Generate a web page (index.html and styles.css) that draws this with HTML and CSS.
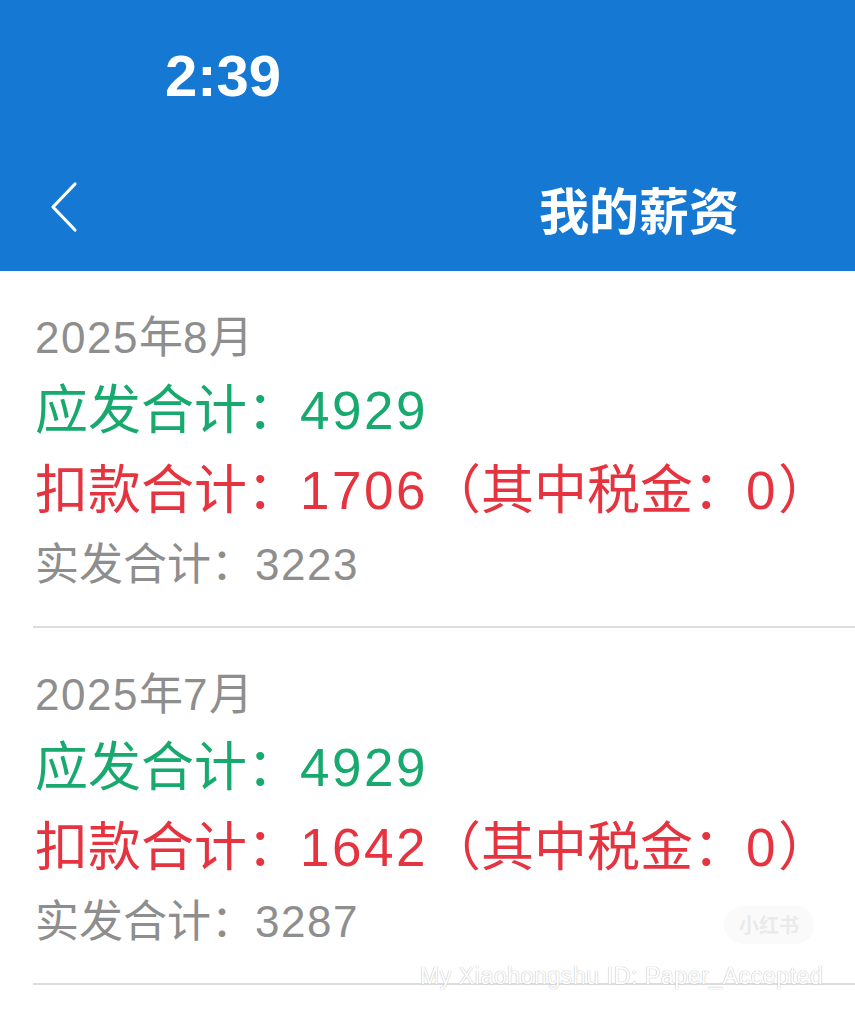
FILE: index.html
```html
<!DOCTYPE html>
<html lang="zh-CN">
<head>
	<meta charset="utf-8">
	<title>我的薪资</title>
	<link rel="stylesheet" href="styles.css">
</head>
<body>
	<div class="topbar">
		<div class="status">
			<span class="time">2:39</span>
		</div>
		<div class="nav">
			<svg class="back" width="30" height="52" viewBox="0 0 30 52">
				<polyline points="25,3 3,26 25,49" fill="none" stroke="#fff" stroke-width="3.2" stroke-linecap="round" stroke-linejoin="round"/>
			</svg>
			<span class="title">我的薪资</span>
		</div>
	</div>

	<div class="list">
		<div class="item">
			<div class="month"><span class="num">2025</span>年<span class="num">8</span>月</div>
			<div class="gross">应发合计：<span class="num">4929</span></div>
			<div class="deduct">扣款合计：<span class="num">1706</span>（其中税金：<span class="num">0</span>）</div>
			<div class="net">实发合计：<span class="num">3223</span></div>
		</div>
		<div class="item">
			<div class="month"><span class="num">2025</span>年<span class="num">7</span>月</div>
			<div class="gross">应发合计：<span class="num">4929</span></div>
			<div class="deduct">扣款合计：<span class="num">1642</span>（其中税金：<span class="num">0</span>）</div>
			<div class="net">实发合计：<span class="num">3287</span></div>
		</div>
	</div>

	<div class="badge">小红书</div>
	<div class="mark">My Xiaohongshu ID: Paper_Accepted</div>
</body>
</html>
```

FILE: styles.css
```css
body {
	margin: 0;
	font-family: "Noto Sans CJK SC", "Noto Sans", sans-serif;
	background-color: #fff;
	overflow: hidden;
}

.topbar {
	height: 271px;
	background-color: #1578d3;
	color: #fff;
}

.status {
	height: 150px;
	display: flex;
	align-items: center;
	padding-left: 165px;
}

.time {
	font-family: "Liberation Sans", Arial, sans-serif;
	font-weight: 700;
	font-size: 58px;
}

.nav {
	height: 121px;
	display: flex;
	align-items: center;
	justify-content: space-between;
	padding-left: 50px;
	padding-right: 116px;
}

.back {
	margin-top: -8px;
}

.title {
	font-size: 50px;
	font-weight: 700;
	margin-top: -6px;
}

.item {
	padding: 31px 0 30px 2px;
	margin-left: 33px;
	border-bottom: 2px solid #dcdcdc;
}

.num {
	font-family: "Liberation Sans", Arial, sans-serif;
	letter-spacing: 1.5px;
	line-height: 0;
}

.month,
.net {
	font-size: 44px;
	color: #8e8e8e;
	line-height: 64px;
}

.net {
	line-height: 70px;
}

.gross,
.deduct {
	font-size: 53px;
	line-height: 80px;
}

.gross .num,
.deduct .num {
	letter-spacing: 2.5px;
}

.gross {
	color: #17a96e;
}

.deduct {
	color: #e5333f;
	white-space: nowrap;
}

.badge {
	position: absolute;
	left: 724px;
	top: 906px;
	width: 90px;
	height: 38px;
	border-radius: 19px;
	background: rgba(240, 240, 240, 0.35);
	color: rgba(230, 230, 230, 0.8);
	font-size: 20px;
	font-weight: 700;
	text-align: center;
	line-height: 38px;
}

.mark {
	position: absolute;
	left: 420px;
	top: 963px;
	font-family: "Liberation Sans", Arial, sans-serif;
	font-size: 23px;
	letter-spacing: 0.6px;
	color: #fff;
	text-shadow: 0 0 1px #bbb, 0 0 1px #bbb;
	white-space: nowrap;
}
```
